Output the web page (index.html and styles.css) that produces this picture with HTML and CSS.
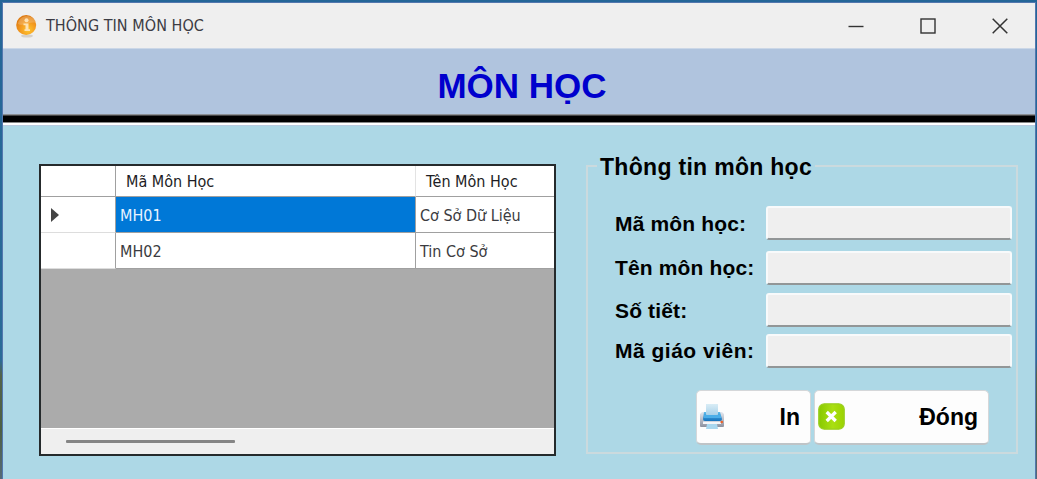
FILE: index.html
```html
<!DOCTYPE html>
<html lang="vi">
<head>
<meta charset="utf-8">
<title>THÔNG TIN MÔN HỌC</title>
<link rel="stylesheet" href="styles.css">
</head>
<body>
<div class="window">
  <header class="titlebar">
    <svg class="info-icon" width="22" height="24" viewBox="0 0 22 24">
      <defs>
        <radialGradient id="orange" cx=".6" cy=".75" r=".75"><stop offset="0" stop-color="#ffc62e"/><stop offset=".5" stop-color="#f49b20"/><stop offset="1" stop-color="#dc7810"/></radialGradient>
      </defs>
      <ellipse cx="11" cy="21" rx="6" ry="1.6" fill="#d5d0ca"/>
      <circle cx="10.2" cy="10" r="10" fill="url(#orange)"/>
      <path d="M2 9C3-1 18-1 20 8C14 6 8 12 2 9Z" fill="#fff" opacity=".2"/>
      <circle cx="10.500" cy="5.200" r="2" fill="#fde2b4"/>
      <path d="M7.500 8.500h5v5.700h1.500V16H8.500v-1.800h1v-4h-2Z" fill="#fde2b4"/>
    </svg>
    <span class="caption">THÔNG TIN MÔN HỌC</span>
    <div class="controls">
      <svg width="16" height="16" viewBox="0 0 16 16"><path d="M.5 8.500h15" stroke="#333" stroke-width="1.400"/></svg>
      <svg width="16" height="16" viewBox="0 0 16 16"><rect x="1" y="1" width="14" height="14" fill="none" stroke="#333" stroke-width="1.400"/></svg>
      <svg width="16" height="16" viewBox="0 0 16 16"><path d="M.7.7l14.600 14.600M15.300.7L.7 15.300" stroke="#333" stroke-width="1.500"/></svg>
    </div>
  </header>
  <div class="banner"><h1>MÔN HỌC</h1></div>
  <div class="rule"></div>
  <main class="content">
    <section class="table">
      <div class="row head"><div class="cell"></div><div class="cell">Mã Môn Học</div><div class="cell">Tên Môn Học</div></div>
      <div class="row"><div class="cell marker"><svg width="8" height="14" viewBox="0 0 8 14"><path d="M0 0l8 7-8 7Z" fill="#444"/></svg></div><div class="cell selected">MH01</div><div class="cell">Cơ Sở Dữ Liệu</div></div>
      <div class="row"><div class="cell"></div><div class="cell">MH02</div><div class="cell">Tin Cơ Sở</div></div>
      <div class="empty"></div>
      <div class="scrollbar"><div class="thumb"></div></div>
    </section>
    <fieldset class="group">
      <legend>Thông tin môn học</legend>
      <div class="fields">
        <label for="ma">Mã môn học:</label><input id="ma" readonly>
        <label class="raised" for="ten">Tên môn học:</label><input id="ten" readonly>
        <label for="so">Số tiết:</label><input id="so" readonly>
        <label class="raised wide" for="gv">Mã giáo viên:</label><input id="gv" readonly>
      </div>
      <div class="actions">
        <button class="print" type="button">
          <svg width="25" height="25" viewBox="0 0 25 25">
            <defs>
              <linearGradient id="body" x2="0" y2="1"><stop stop-color="#e6e9f0"/><stop offset="1" stop-color="#8d919f"/></linearGradient>
              <linearGradient id="tray" x2="0" y2="1"><stop stop-color="#61bdec"/><stop offset="1" stop-color="#1472bd"/></linearGradient>
              <linearGradient id="paper" x2="0" y2="1"><stop stop-color="#d9edf6"/><stop offset="1" stop-color="#a5cfe8"/></linearGradient>
            </defs>
            <path d="M2 8h20l2 2v12q0 1-1 1H1q-1 0-1-1V10Z" fill="url(#body)"/>
            <path d="M4 8h16l2 7q0 2-2 2H5q-2 0-2-2Z" fill="url(#tray)"/>
            <path d="M6 0h12v10q0 2-2 2H8q-2 0-2-2Z" fill="url(#paper)"/>
            <path d="M4 11h17v3H4Z" fill="#4caee8"/>
            <path d="M3 17.500h18v2.500H3Z" fill="#f3f5f9"/>
            <path d="M7 20h10l1 5H6Z" fill="#a9d7ef"/>
            <circle cx="21.700" cy="18" r="1.300" fill="#ee6128"/>
          </svg>In
        </button>
        <button class="close" type="button">
          <svg width="27" height="27" viewBox="0 0 27 27">
            <defs><linearGradient id="lime" x2="1" y2="0"><stop stop-color="#88c900"/><stop offset=".55" stop-color="#aadf12"/><stop offset="1" stop-color="#9bd300"/></linearGradient></defs>
            <rect x=".8" y=".8" width="25.400" height="25.400" rx="5.500" fill="url(#lime)" stroke="#9ace21" stroke-width="1.300"/>
            <path d="M8.700 9l9 9M17.700 9l-9 9" stroke="#fff" stroke-width="3.300"/>
          </svg>Đóng
        </button>
      </div>
    </fieldset>
  </main>
</div>
</body>
</html>
```
FILE: styles.css
```css
* { box-sizing: border-box; }
body {
  margin: 0;
  width: 1037px;
  height: 479px;
  overflow: hidden;
  padding: 2px 1px 0 2px;
  background: linear-gradient(#246698 0, #2b6b98 360px, #53634b 375px, #4d6045 430px, #566a78 479px);
  font-family: "Liberation Sans", Arial, sans-serif;
}
.window {
  height: 477px;
  border: 1px solid #5277ae;
  border-bottom: 0;
  background: #add8e6;
}
.titlebar {
  display: flex;
  align-items: center;
  height: 45px;
  padding: 0 27px 0 13px;
  background: #efefef;
}
.info-icon { margin-top: 2px; }
.caption {
  margin-left: 8px;
  font: 16px "DejaVu Sans Condensed", "DejaVu Sans", sans-serif;
  letter-spacing: .05px;
  color: #3c3c44;
  white-space: nowrap;
}
.controls { display: flex; gap: 56px; margin-left: auto; }
.banner {
  display: flex;
  justify-content: center;
  height: 66px;
  padding: 18px 0 0 6px;
  border-top: 1px solid #cbd7e7;
  background: #b0c4de;
}
h1 {
  margin: 0;
  font-size: 35px;
  line-height: 38px;
  font-weight: 700;
  color: #0000cd;
}
.rule {
  height: 12px;
  background: linear-gradient(#8b8f94 0 1px, #444 1px 2px, #000 2px 8px, #888 8px 9px, #fff 9px 11px, #b9cbe0 11px);
}
.content { display: flex; padding: 38px 15px 0 36px; }
.table {
  display: flex;
  flex-direction: column;
  width: 517px;
  height: 292px;
  border: 2px solid #252a2c;
  background: #ababab;
  font: 16px "DejaVu Sans Condensed", "DejaVu Sans", sans-serif;
  color: #3b3b40;
}
.row { display: grid; grid-template-columns: 75px 300px 1fr; height: 36px; }
.head { height: 31px; color: #1d1d24; }
.cell {
  display: flex;
  align-items: center;
  padding: 1px 0 0 4px;
  border-right: 1px solid #a0a0a0;
  border-bottom: 1px solid #a0a0a0;
  background: #fff;
  white-space: nowrap;
}
.cell:first-child { border-bottom-color: #ddd; }
.head .cell:first-child { border-bottom-color: #a0a0a0; }
.head .cell { padding-left: 10px; }
.head .cell:nth-child(2) { border-right-color: #e3e3e3; }
.cell:last-child { border-right: 0; }
.cell.marker { padding-left: 10px; }
.cell.selected { background: #0078d7; color: #e9f4ff; }
.empty { flex: 1; }
.scrollbar {
  display: flex;
  align-items: center;
  height: 26px;
  padding-left: 25px;
  border-top: 1px solid #fff;
  background: #efefef;
}
.thumb { width: 169px; height: 3px; border-radius: 1px; background: #858585; }

.group {
  width: 432px;
  height: 298px;
  margin: -8px 0 0 30px;
  padding: 0;
  border: 2px solid #cbdade;
}
legend {
  margin-left: 9px;
  padding: 0 3px;
  height: 19px;
  font-size: 23px;
  line-height: 23px;
  font-weight: 700;
  letter-spacing: .3px;
  white-space: nowrap;
}
.fields {
  display: grid;
  grid-template-columns: 151px 246px;
  grid-template-rows: 45px 42px 41px 34px;
  margin: 31px 0 0 27px;
}
label {
  height: 34px;
  padding-top: 6px;
  font-size: 21px;
  line-height: 24px;
  font-weight: 700;
  letter-spacing: .15px;
  white-space: nowrap;
}
.raised { padding-top: 5px; }
.wide { letter-spacing: .5px; }
input {
  width: 246px;
  height: 34px;
  border: 2px solid #f8fafb;
  border-bottom: 2px solid #929697;
  border-radius: 3px;
  background: #efefef;
  outline: 0;
}
.actions { display: flex; gap: 3px; margin: 22px 0 0 108px; }
button {
  display: flex;
  align-items: center;
  justify-content: space-between;
  height: 55px;
  border: 1px solid #d5d7d9;
  border-bottom: 2px solid #bfc4c7;
  border-radius: 5px;
  background: #fdfdfd;
  font: 700 23px "Liberation Sans", Arial, sans-serif;
  color: #000;
}
.print svg { margin-top: -2px; }
.close svg { margin-top: -1px; }
.print { width: 115px; padding: 0 10px 0 3px; }
.close { width: 175px; padding: 0 10px 0 3px; }
```
